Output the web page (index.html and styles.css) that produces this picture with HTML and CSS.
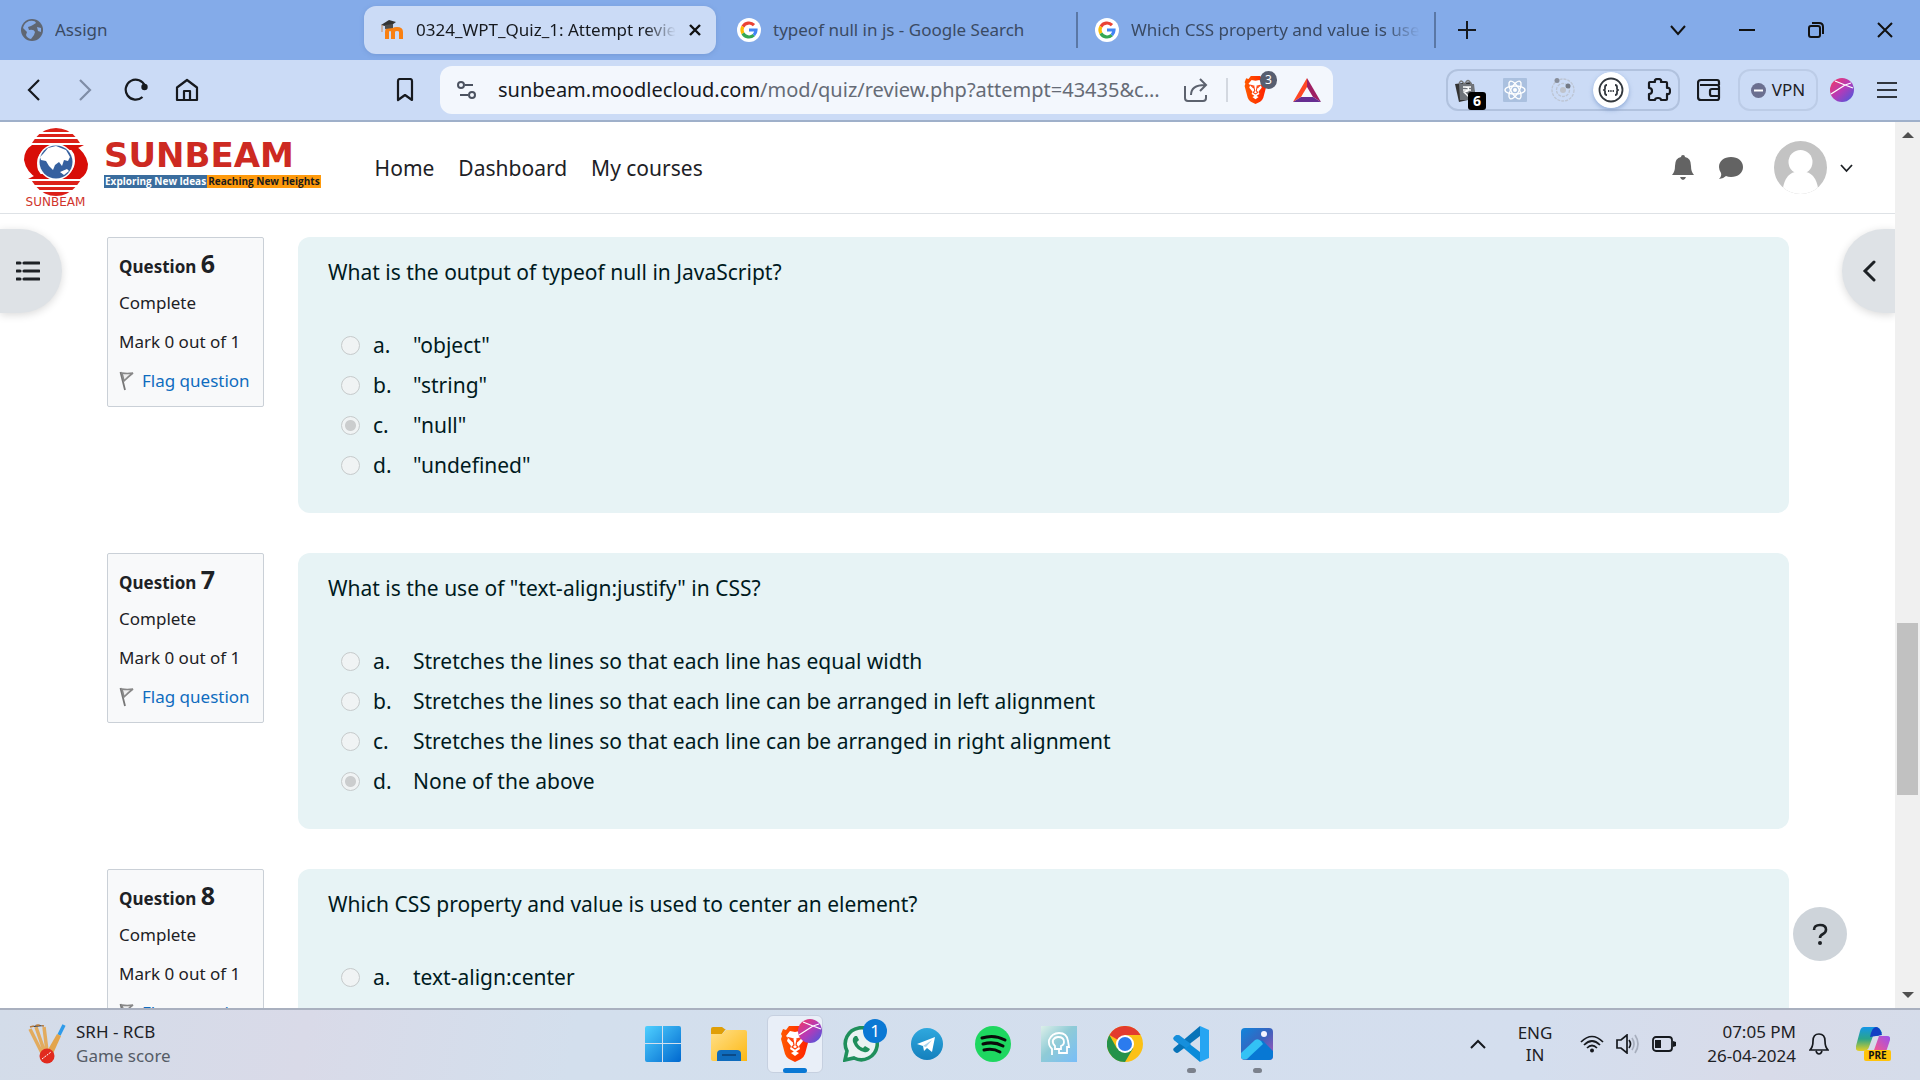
FILE: index.html
```html
<!DOCTYPE html>
<html lang="en">
<head>
<meta charset="utf-8">
<title>0324_WPT_Quiz_1: Attempt review</title>
<link rel="stylesheet" href="styles.css">
</head>
<body>
<svg class="defs" aria-hidden="true">
  <defs>
    <linearGradient id="gProfile" x1="0" y1="0" x2="1" y2="1"><stop offset="0" stop-color="#f8385c"/><stop offset=".5" stop-color="#b53ab8"/><stop offset="1" stop-color="#3f5be0"/></linearGradient>
    <linearGradient id="gWin" x1="0" y1="0" x2="1" y2="1"><stop offset="0" stop-color="#4fd0ff"/><stop offset="1" stop-color="#0068cf"/></linearGradient>
    <linearGradient id="gFolder" x1="0" y1="0" x2="1" y2="1"><stop offset="0" stop-color="#ffe08a"/><stop offset="1" stop-color="#fdb813"/></linearGradient>
    <linearGradient id="gBrave" x1="0" y1="0" x2="1" y2="0"><stop offset="0" stop-color="#ff5a00"/><stop offset="1" stop-color="#ff2000"/></linearGradient>
    <linearGradient id="gTele" x1="0" y1="0" x2="0" y2="1"><stop offset="0" stop-color="#2fa8de"/><stop offset="1" stop-color="#1480bd"/></linearGradient>
    <linearGradient id="gHead" x1="0" y1="0" x2="1" y2="1"><stop offset="0" stop-color="#dcefe9"/><stop offset=".45" stop-color="#8fcbd6"/><stop offset="1" stop-color="#78bdf8"/></linearGradient>
    <linearGradient id="gPhoto" x1="0" y1="0" x2="1" y2="1"><stop offset="0" stop-color="#0f86dc"/><stop offset=".5" stop-color="#3a62bd"/><stop offset="1" stop-color="#b454b8"/></linearGradient>
    <linearGradient id="gCopA" x1="0" y1="0" x2="0" y2="1"><stop offset="0" stop-color="#1496e8"/><stop offset=".5" stop-color="#2ba58a"/><stop offset="1" stop-color="#e6cf25"/></linearGradient>
    <linearGradient id="gCopB" x1="1" y1="0" x2="0" y2="1"><stop offset="0" stop-color="#9a50f0"/><stop offset="1" stop-color="#ff5a80"/></linearGradient>
    <symbol id="google" viewBox="0 0 24 24">
      <circle cx="12" cy="12" r="12" fill="#fff"/>
      <g fill="none" stroke-width="3.2">
        <path d="M5.9 8.6A7 7 0 0 1 17 7.1" stroke="#ea4335"/>
        <path d="M5.9 15.4a7 7 0 0 1 0-6.8" stroke="#fbbc05"/>
        <path d="M16.8 17.1A7 7 0 0 1 5.9 15.4" stroke="#34a853"/>
        <path d="M12 12h7a7 7 0 0 1-2.2 5.1" stroke="#4285f4"/>
      </g>
    </symbol>
    <symbol id="profile" viewBox="0 0 24 24">
      <circle cx="12" cy="12" r="12" fill="url(#gProfile)"/>
      <path d="M1 16 15 7l6-2M5 3l10 4 8 3" stroke="#fff" stroke-width="1.3" fill="none"/>
    </symbol>
    <symbol id="lion" viewBox="0 0 28 36">
      <path d="M8 0h12l3 4 3-1 2 5-1 2 1 3-4 15q-1 3-4 5l-6 3-6-3q-3-2-4-5L0 13l1-3-1-2 2-5 3 1z" fill="url(#gBrave)"/>
      <path d="M14 6 9 5 5 10l2 2-1 3 4 5-1 3 3 2 2 2 2-2 3-2-1-3 4-5-1-3 2-2-4-5z" fill="#fff"/>
      <path d="m8 12 4 1-1 2zM20 12l-4 1 1 2zM12 14l1 5-2 2 3 2 3-2-2-2 1-5" stroke="#ff4510" stroke-width="1.3" fill="none"/>
      <path d="m10 27 4-2 4 2-4 3z" fill="#fff"/>
    </symbol>
    <symbol id="flag" viewBox="0 0 16 20">
      <path d="M1.500 1 6 19" stroke="#777" stroke-width="1.8" fill="none"/>
      <path d="M3 2q5 1 11 0-4 3-9 8z" stroke="#888" stroke-width="1.6" fill="#eee"/>
    </symbol>
  </defs>
</svg>

<header class="browser">
  <div class="tabs">
    <button class="tab">
      <svg width="22" height="22" viewBox="0 0 22 22"><circle cx="11" cy="11" r="11" fill="#5f6672"/><path d="M8 2q6-1 7 2-3 2-5 3l-3 1 1 3q5-1 6 2l-1 3-3 4q-4-1-5-4l1-3-4-4q1-5 6-7zM16 8l4 1v4l-3-1z" fill="#86abe6"/></svg>
      <span class="tab-title">Assign</span>
    </button>
    <button class="tab active">
      <svg width="24" height="22" viewBox="0 0 24 22"><path d="M7 20v-7q0-3 3-3t3 3v7m0-7q0-3 4-3t4 3v7" fill="none" stroke="#f98012" stroke-width="4"/><path d="m1 6 8-5 7 2-7 5z" fill="#333"/><path d="M5 6v4l8-1V5z" fill="#4d4d4d"/><path d="M2 6v7" stroke="#c88a5a"/></svg>
      <span class="tab-title">0324_WPT_Quiz_1: Attempt review</span>
      <svg width="14" height="14" viewBox="0 0 14 14"><path d="m2 2 10 10M12 2 2 12" stroke="#111" stroke-width="2.400"/></svg>
    </button>
    <button class="tab divided">
      <svg width="24" height="24"><use href="#google"/></svg>
      <span class="tab-title">typeof null in js - Google Search</span>
    </button>
    <button class="tab divided last">
      <svg width="24" height="24"><use href="#google"/></svg>
      <span class="tab-title">Which CSS property and value is used to</span>
    </button>
    <button class="new-tab" aria-label="New tab"><svg width="18" height="18" viewBox="0 0 18 18"><path d="M9 0v18M0 9h18" stroke="#16191e" stroke-width="2"/></svg></button>
    <div class="window-controls">
      <button aria-label="Search tabs"><svg width="16" height="16" viewBox="0 0 16 16"><path d="m1 4 7 8 7-8" fill="none" stroke="#111" stroke-width="2"/></svg></button>
      <button aria-label="Minimize"><svg width="16" height="16" viewBox="0 0 16 16"><path d="M0 8h16" stroke="#111" stroke-width="2"/></svg></button>
      <button aria-label="Restore"><svg width="16" height="16" viewBox="0 0 16 16"><rect x="1" y="4" width="11" height="11" rx="2" fill="none" stroke="#111" stroke-width="2"/><path d="M4 1h7q4 0 4 4v7" fill="none" stroke="#111" stroke-width="2"/></svg></button>
      <button aria-label="Close"><svg width="16" height="16" viewBox="0 0 16 16"><path d="m1 1 14 14M15 1 1 15" stroke="#111" stroke-width="2"/></svg></button>
    </div>
  </div>

  <div class="toolbar">
    <div class="nav-buttons">
      <button aria-label="Back"><svg width="24" height="24" viewBox="0 0 24 24"><path d="m17 2-10 10 10 10" fill="none" stroke="#16191e" stroke-width="2.200"/></svg></button>
      <button aria-label="Forward"><svg width="24" height="24" viewBox="0 0 24 24"><path d="m7 2 10 10L7 22" fill="none" stroke="#7f8da6" stroke-width="2.200"/></svg></button>
      <button aria-label="Reload"><svg width="24" height="24" viewBox="0 0 24 24"><path d="M18.500 19A10 10 0 1 1 21 8" fill="none" stroke="#16191e" stroke-width="2.200"/><circle cx="20.500" cy="9" r="3.200" fill="#16191e"/></svg></button>
      <button aria-label="Home"><svg width="24" height="24" viewBox="0 0 24 24"><path d="M2 9.500 12 2l10 7.500V22H2zM9 22v-9h6v9" fill="none" stroke="#16191e" stroke-width="2.200" stroke-linejoin="round"/></svg></button>
    </div>
    <button class="bookmark" aria-label="Bookmark this page"><svg width="18" height="24" viewBox="0 0 18 24"><path d="M2 3q0-2 2-2h10q2 0 2 2v19l-7-5-7 5z" fill="none" stroke="#16191e" stroke-width="2.200" stroke-linejoin="round"/></svg></button>
    <div class="address">
      <svg width="20" height="20" viewBox="0 0 20 20"><g fill="none" stroke="#4b5260" stroke-width="2"><circle cx="4" cy="5" r="3"/><path d="M8 5h8M3 15h8"/><circle cx="15" cy="15" r="3"/></g></svg>
      <div class="url"><span>sunbeam.moodlecloud.com</span>/mod/quiz/review.php?attempt=43435&amp;c...</div>
      <svg width="24" height="24" viewBox="0 0 24 24"><path d="M1 8v12q0 3 3 3h15q3 0 3-3v-3M7 17q0-10 14-10M16 1l6 6-6 6" fill="none" stroke="#5c626e" stroke-width="2"/></svg>
      <i class="separator"></i>
      <div class="shield"><svg width="23" height="28"><use href="#lion"/></svg><span class="count">3</span></div>
      <svg class="bat" width="28" height="24" viewBox="0 0 28 24"><path d="M14 0 0 24l8-5 6-10z" fill="#ff4724"/><path d="m14 0 14 24-8-5-6-10z" fill="#9e1f63"/><path d="m0 24 8-5h12l8 5z" fill="#662d91"/></svg>
    </div>
    <div class="extensions">
      <div class="bag"><svg width="22" height="24" viewBox="0 0 22 24"><path d="M0 6 16 4l6 16-18 4z" fill="#333"/><path d="M4 6h15l2 16H5z" fill="#70747a"/><path d="M4 6q2-6 5 0m1 0q3-7 6 0" fill="none" stroke="#777" stroke-width="1.500"/><path d="M8 9h8m-8 3h8m-6-3q5 0 3 4l-4 1 5 5" stroke="#fff" fill="none" stroke-width="1.300"/></svg><span class="count">6</span></div>
      <svg width="24" height="24" viewBox="0 0 24 24"><rect width="24" height="24" rx="1" fill="#aac0df"/><g fill="none" stroke="#fff" stroke-width="1.400"><ellipse cx="12" cy="12" rx="10" ry="4"/><ellipse cx="12" cy="12" rx="10" ry="4" transform="rotate(60 12 12)"/><ellipse cx="12" cy="12" rx="10" ry="4" transform="rotate(120 12 12)"/></g><circle cx="12" cy="12" r="2" fill="#fff"/></svg>
      <svg width="24" height="24" viewBox="0 0 24 24"><g fill="none" stroke="#bdc5d3" stroke-width="1.300" stroke-dasharray="3 1"><circle cx="12" cy="12" r="11"/><circle cx="12" cy="12" r="6.500"/></g><circle cx="12" cy="12" r="3" fill="#bfc3cb"/><circle cx="6" cy="2.500" r="2.500" fill="#878d99"/><circle cx="17" cy="8" r="2.500" fill="#737985"/></svg>
      <svg class="braces" width="36" height="36" viewBox="0 0 36 36"><circle cx="18" cy="18" r="18" fill="#fff"/><g fill="none" stroke="#33383e" stroke-width="1.800"><circle cx="18" cy="18" r="11.500"/><path d="M14 13q-2 0-2 2v2l-1 1 1 1v2q0 2 2 2M22 13q2 0 2 2v2l1 1-1 1v2q0 2-2 2"/><path d="M15 19h6" stroke-dasharray="1.300 1"/></g></svg>
      <svg width="24" height="24" viewBox="0 0 24 24"><path d="M3 4h5q-1-3 3-3t3 3h5q1 0 1 1v5q3-1 3 3t-3 3v5q0 1-1 1h-5q0-2-3-2t-3 2H3q-1 0-1-1v-5q3 0 3-3t-3-3V5q0-1 1-1z" fill="none" stroke="#16191e" stroke-width="2.200" stroke-linejoin="round"/></svg>
    </div>
    <svg width="24" height="24" viewBox="0 0 24 24"><path d="M22 7V4q0-2-2-2H4Q1 2 1 5v14q0 3 3 3h16q2 0 2-2V9q0-2-2-2H3M22 11h-7q-2 0-2 2v3q0 2 2 2h7" fill="none" stroke="#16191e" stroke-width="2.200"/></svg>
    <button class="vpn"><svg width="15" height="15" viewBox="0 0 15 15"><circle cx="7.500" cy="7.500" r="7.500" fill="#6b6f90"/><path d="M3 7.500h9" stroke="#fff" stroke-width="2"/></svg>VPN</button>
    <svg class="avatar-chip" width="24" height="24"><use href="#profile"/></svg>
    <button class="menu" aria-label="Menu"><svg width="20" height="20" viewBox="0 0 20 20"><path d="M0 3h20M0 10h20M0 17h20" stroke="#30353d" stroke-width="2"/></svg></button>
  </div>
</header>

<div class="viewport">
  <div class="page">
    <nav class="site-nav">
      <a href="#" class="brand" aria-label="Sunbeam home">
        <span class="emblem">
          <svg width="64" height="68" viewBox="0 0 64 68"><defs><clipPath id="oval"><ellipse cx="32" cy="34" rx="29" ry="34"/></clipPath>
            <path id="swoosh" d="M8 17H60L50 22H44Q32 14 22 20Q10 28 14 42L20 51H14Q2 44 0 32Q0 22 8 17z"/></defs>
            <g clip-path="url(#oval)" fill="#dc2018"><path d="M0 0h64v4H0zM0 6h64v3H0zM0 11h64v4H0zM0 53h64v4H0zM0 59h64v3H0zM0 64h64v4H0z"/></g>
            <g fill="#d80e08"><use href="#swoosh"/><use href="#swoosh" transform="rotate(180 32 34)"/></g>
            <circle cx="32" cy="34" r="18" fill="#fff"/><circle cx="32" cy="34" r="16.500" fill="#35609f"/>
            <path d="m19 26 5-6 8-2 10 4 4 7-2 4-4-1-2 6-3-4-4 3-2 5-4-4-3-5-5-1-1-3zM36 44l7-3 2 2-5 4z" fill="#fff"/>
          </svg>
          <span class="emblem-name">SUNBEAM</span>
        </span>
        <span class="wordmark"><b>SUNBEAM</b><span class="tagline"><span>Exploring New Ideas</span><span>Reaching New Heights</span></span></span>
      </a>
      <a href="#">Home</a>
      <a href="#">Dashboard</a>
      <a href="#">My courses</a>
      <div class="user-tools">
        <button aria-label="Notifications"><svg width="22" height="26" viewBox="0 0 22 26"><path d="M11 0q2 0 2 2 6 1 6 9 0 6 3 9H0q3-3 3-9 0-8 6-9 0-2 2-2zM8 22h6q-1 3-3 3t-3-3z" fill="#636363"/></svg></button>
        <button aria-label="Messages"><svg width="24" height="24" viewBox="0 0 24 24"><path d="M12 1c7 0 12 4 12 10s-5 10-12 10q-3 0-5-1-3 3-7 3 3-3 2-6-2-3-2-6C0 5 5 1 12 1z" fill="#636363"/></svg></button>
        <button class="user-menu" aria-label="User menu"><svg width="53" height="53" viewBox="0 0 53 53"><defs><clipPath id="av"><circle cx="26.500" cy="26.500" r="26.500"/></clipPath></defs><g clip-path="url(#av)"><rect width="53" height="53" fill="#c3c3c3"/><circle cx="26.500" cy="21" r="12" fill="#fff"/><path d="M8 53q2-20 13-22h11q11 2 13 22z" fill="#fff"/></g></svg><svg width="13" height="10" viewBox="0 0 13 10"><path d="m1 2 5.500 6L12 2" fill="none" stroke="#1d2125" stroke-width="1.800"/></svg></button>
      </div>
    </nav>

    <main class="questions">
      <section class="question">
        <div class="info"><h3>Question <span>6</span></h3><p>Complete</p><p>Mark 0 out of 1</p><a href="#"><svg width="16" height="20"><use href="#flag"/></svg>Flag question</a></div>
        <fieldset class="formulation" disabled>
          <legend>What is the output of typeof null in JavaScript?</legend>
          <label><input type="radio" name="q6"><span>a.</span>"object"</label>
          <label><input type="radio" name="q6"><span>b.</span>"string"</label>
          <label><input type="radio" name="q6" checked><span>c.</span>"null"</label>
          <label><input type="radio" name="q6"><span>d.</span>"undefined"</label>
        </fieldset>
      </section>
      <section class="question">
        <div class="info"><h3>Question <span>7</span></h3><p>Complete</p><p>Mark 0 out of 1</p><a href="#"><svg width="16" height="20"><use href="#flag"/></svg>Flag question</a></div>
        <fieldset class="formulation" disabled>
          <legend>What is the use of "text-align:justify" in CSS?</legend>
          <label><input type="radio" name="q7"><span>a.</span>Stretches the lines so that each line has equal width</label>
          <label><input type="radio" name="q7"><span>b.</span>Stretches the lines so that each line can be arranged in left alignment</label>
          <label><input type="radio" name="q7"><span>c.</span>Stretches the lines so that each line can be arranged in right alignment</label>
          <label><input type="radio" name="q7" checked><span>d.</span>None of the above</label>
        </fieldset>
      </section>
      <section class="question">
        <div class="info"><h3>Question <span>8</span></h3><p>Complete</p><p>Mark 0 out of 1</p><a href="#"><svg width="16" height="20"><use href="#flag"/></svg>Flag question</a></div>
        <fieldset class="formulation" disabled>
          <legend>Which CSS property and value is used to center an element?</legend>
          <label><input type="radio" name="q8"><span>a.</span>text-align:center</label>
        </fieldset>
      </section>
    </main>

    <button class="drawer drawer-left" aria-label="Open course index"><svg width="24" height="22" viewBox="0 0 24 22"><path d="M8 3h15M8 11h15M8 19h15M1 3h3M1 11h3M1 19h3" stroke="#1d2125" stroke-width="3.200" stroke-linecap="round"/></svg></button>
    <button class="drawer drawer-right" aria-label="Open block drawer"><svg width="14" height="22" viewBox="0 0 14 22"><path d="m12 2-9 9 9 9" fill="none" stroke="#1d2125" stroke-width="3" stroke-linecap="round"/></svg></button>
    <button class="help" aria-label="Help"><svg width="16" height="22" viewBox="0 0 16 22"><path d="M2 7q0-5 6-5t6 4.500q0 3-3 4.500-3 1.500-3 4" fill="none" stroke="#1d2125" stroke-width="2.600"/><circle cx="8" cy="20" r="2" fill="#1d2125"/></svg></button>
  </div>
  <div class="scrollbar">
    <svg width="12" height="25" viewBox="0 0 12 25"><path d="m0 16 6-6 6 6z" fill="#505050"/></svg>
    <i class="above"></i><i class="thumb"></i><i class="below"></i>
    <svg width="12" height="25" viewBox="0 0 12 25"><path d="m0 9 6 6 6-6z" fill="#505050"/></svg>
  </div>
</div>

<footer class="taskbar">
  <div class="widget">
    <svg width="38" height="40" viewBox="0 0 38 40"><g stroke="#e2ab5e" stroke-width="3.500"><path d="m2 5 13 26M8 3l9 26M16 3l3 24"/></g><path d="m2 3 8-2 6 1" stroke="#b5793c" stroke-width="1.500" stroke-dasharray="4 2"/><path d="m36 1-5 10" stroke="#2f9bea" stroke-width="3.500"/><path d="m29 10 4 2-9 20-6-3z" fill="#e3a44b"/><circle cx="19" cy="32" r="7.500" fill="#e12a1e"/><path d="m14 35 9-7" stroke="#fff" stroke-width="1" stroke-dasharray="2 1"/></svg>
    <div><span>SRH - RCB</span><span class="muted">Game score</span></div>
  </div>
  <div class="apps">
    <button aria-label="Start"><svg width="36" height="36" viewBox="0 0 36 36"><path d="M2 0h15v17H0V2q0-2 2-2zM18 0h16q2 0 2 2v15H18zM0 18h17v18H2q-2 0-2-2zM18 18h18v16q0 2-2 2H18z" fill="url(#gWin)"/></svg></button>
    <button aria-label="File Explorer"><svg width="36" height="34" viewBox="0 0 36 34"><path d="M0 2q0-2 2-2h9l4 3h-1l-3 4H0z" fill="#e09f06"/><path d="M0 7h11l4-4h19q2 0 2 2v29H2q-2 0-2-2z" fill="url(#gFolder)"/><path d="M6 34v-7q0-4 4-4h16q4 0 4 4v7z" fill="#0f6cbd"/><path d="M11 28h14" stroke="#0b4a87" stroke-width="2"/></svg></button>
    <button class="current" aria-label="Brave"><svg class="app-icon" width="28" height="36"><use href="#lion"/></svg><svg class="overlay" width="24" height="24"><use href="#profile"/></svg></button>
    <button aria-label="WhatsApp"><svg width="36" height="36" viewBox="0 0 36 36"><path d="m2 34 2-9A16 16 0 1 1 11 32z" fill="#e9f3f2" stroke="#1f8f5b" stroke-width="3.600"/><path d="M12 10q-3 2-2 6 3 8 11 10 4 1 6-3l-5-3-2 2q-5-2-6-6l2-2-2-4z" fill="#1f8f5b"/></svg><span class="overlay badge">1</span></button>
    <button aria-label="Telegram"><svg width="32" height="32" viewBox="0 0 32 32"><circle cx="16" cy="16" r="16" fill="url(#gTele)"/><path d="m6 16 18-7-3 15-5-4-3 3-1-5z" fill="#fff"/><path d="m12 18 9-6-6 7z" fill="#a9d3ec"/></svg></button>
    <button aria-label="Spotify"><svg width="36" height="36" viewBox="0 0 36 36"><circle cx="18" cy="18" r="18" fill="#1ed760"/><path d="M7 12q12-4 23 2M8 18q11-3 20 2M9 24q9-2 16 2" fill="none" stroke="#0a0a0a" stroke-width="3" stroke-linecap="round"/></svg></button>
    <button aria-label="Assistant"><svg width="36" height="36" viewBox="0 0 36 36"><rect width="36" height="36" fill="url(#gHead)"/><g fill="none" stroke="#fff" stroke-width="1.800"><path d="M11 29v-6q-4-4-3-9 3-7 10-7 8 0 9 8l1 6h-2v6h-8v-5"/><path d="M14 24v-4q-3-3-2-6 2-3 5-3 6 0 6 5 0 3-3 4v3h-5"/></g></svg></button>
    <button aria-label="Chrome"><svg width="36" height="36" viewBox="0 0 36 36"><circle cx="18" cy="18" r="18" fill="#fbc116"/><path d="M18 18 2.400 9A18 18 0 0 1 33.600 9H18z" fill="#e33b2e"/><path d="M2.400 9A18 18 0 0 0 18 36l8-13.500-8-4.500-8 4.500z" fill="#24924a"/><circle cx="18" cy="18" r="9" fill="#fff"/><circle cx="18" cy="18" r="7" fill="#2b7bee"/></svg></button>
    <button class="open" aria-label="Visual Studio Code"><svg width="36" height="36" viewBox="0 0 36 36"><path d="M2 10q2-2 4 0l21 16v10L1 14q-2-2 1-4z" fill="#0b8bd9"/><path d="M2 26q2 2 4 0l21-16V0L1 22q-2 2 1 4z" fill="#0773b8"/><path d="m2 10 4-1 12 9-5 4L1 14z" fill="#168fdc"/><path d="m27 0 9 4v28l-9 4z" fill="#26a5f2"/></svg></button>
    <button class="open" aria-label="Photos"><svg width="32" height="32" viewBox="0 0 32 32"><rect width="32" height="32" rx="4" fill="url(#gPhoto)"/><path d="m6 32 12-18q3-3 5 0l9 9v5q0 4-4 4z" fill="#0878d4"/><path d="M0 25 14 12q3-2 6 1l2 3L6 31q-6 2-6-3z" fill="#33c2f5"/><circle cx="23" cy="6" r="3" fill="#f4f4ff"/></svg></button>
  </div>
  <div class="tray">
    <svg width="16" height="10" viewBox="0 0 16 10"><path d="m1 9 7-7 7 7" fill="none" stroke="#16191e" stroke-width="2"/></svg>
    <div class="lang"><span>ENG</span><span>IN</span></div>
    <div class="status">
      <svg width="24" height="18" viewBox="0 0 24 18"><g fill="none" stroke="#16191e" stroke-width="1.700"><path d="M1 7q11-11 22 0M4 10q8-8 16 0M7 13q5-5 10 0"/></g><circle cx="12" cy="15.500" r="2" fill="#16191e"/></svg>
      <svg width="24" height="20" viewBox="0 0 24 20"><path d="M1 6h4l6-5v18l-6-5H1zM13 6q3 4 0 8" fill="none" stroke="#16191e" stroke-width="1.700"/><path d="M16 4q4 6 0 12M19 1q6 9 0 18" fill="none" stroke="#a7aebd" stroke-width="1.700"/></svg>
      <svg width="24" height="16" viewBox="0 0 24 16"><rect x="1" y="1" width="19" height="14" rx="3" fill="none" stroke="#16191e" stroke-width="1.800"/><path d="M3 4h6v8H3zM21 5l3 1v4l-3 1z" fill="#16191e"/></svg>
    </div>
    <div class="clock"><span>07:05 PM</span><span>26-04-2024</span></div>
    <svg width="20" height="22" viewBox="0 0 20 22"><path d="M1 17q3-3 3-9 0-7 6-7t6 7q0 6 3 9zM7 18q1 3 3 3t3-3" fill="none" stroke="#16191e" stroke-width="1.700"/></svg>
    <div class="copilot"><svg width="34" height="26" viewBox="0 0 34 26"><path d="M8 0h12q4 0 6 6l-4 3h-5L13 20q-1 4-6 4H3q-4 0-3-5L4 4q1-4 4-4z" fill="url(#gCopA)"/><path d="M14 10q2-10 6-10 4 0 6 8z" fill="#123fc4"/><path d="M23 9h8q4 0 3 4l-3 9q-1 4-5 4h-9z" fill="url(#gCopB)"/></svg><span class="overlay pre">PRE</span></div>
  </div>
</footer>
</body>
</html>
```
FILE: styles.css
```css
* { box-sizing: border-box; }

body {
  margin: 0;
  height: 100vh;
  display: flex;
  flex-direction: column;
  overflow: hidden;
  font: 21px/34px "Noto Sans", "Open Sans", sans-serif;
  color: #1d2125;
  background: #fff;
}

button { margin: 0; padding: 0; border: 0; background: none; font: inherit; color: inherit; }
a { color: inherit; text-decoration: none; }
svg { display: block; flex: none; }
.defs { position: absolute; width: 0; height: 0; }

/* Browser chrome */
.tabs { height: 60px; display: flex; align-items: center; background: #84abe9; font-size: 17px; }
.tab {
  flex: 0 1 358px;
  height: 48px;
  min-width: 0;
  display: flex;
  align-items: center;
  gap: 12px;
  padding: 0 16px;
  color: #3a4a63;
  position: relative;
}
.tab:first-child { padding-left: 21px; }
.tab-title { flex: 1; min-width: 0; overflow: hidden; white-space: nowrap; text-align: left; }
.tab.active { flex-basis: 352px; margin: 0 4px 0 6px; padding-right: 14px; border-radius: 12px; background: #cbdbf6; color: #16191e; box-shadow: 0 1px 4px #5f83bb66; }
.tab.active .tab-title, .tab.last .tab-title { mask-image: linear-gradient(to right, #000 88%, transparent); }
.tab.divided { padding-left: 17px; }
.tab.divided::after { content: ""; position: absolute; right: 0; top: 6px; width: 2px; height: 36px; background: #5a77a5; }
.new-tab { margin-left: 22px; }
.window-controls { margin-left: auto; padding-right: 27px; display: flex; gap: 53px; }

.toolbar { height: 62px; display: flex; align-items: center; background: #cbdbf6; border-bottom: 2px solid #9fb0ca; }
.nav-buttons { display: flex; gap: 27px; padding-left: 22px; }
.bookmark { margin: 0 26px 0 197px; }
.address { flex: 1; height: 48px; min-width: 0; display: flex; align-items: center; padding: 0 12px 0 17px; background: #f3f7fd; border-radius: 12px; font-size: 20px; }
.url { flex: 1; min-width: 0; margin-left: 21px; overflow: hidden; white-space: nowrap; color: #656b76; }
.url span { color: #16191e; }
.separator { width: 2px; height: 24px; margin: 0 16px 0 18px; background: #d3d8e0; }
.shield, .bag { position: relative; }
.shield .count { position: absolute; left: 16px; top: -5px; width: 17px; height: 18px; border-radius: 9px; background: #575e70; color: #fff; font-size: 12px; line-height: 18px; text-align: center; }
.bat { margin-left: 26px; }
.extensions { height: 42px; margin-left: 113px; display: flex; align-items: center; gap: 24px; padding: 0 7px; border: 2px solid #b1c2de; border-radius: 12px; }
.bag { width: 24px; }
.bag .count { position: absolute; left: 13px; top: 14px; width: 18px; height: 18px; border-radius: 3px; background: #000; color: #fff; font-size: 14px; font-weight: 700; line-height: 18px; text-align: center; }
.braces { margin: 0 -6px; border-radius: 50%; box-shadow: 0 2px 4px #5f83bb88; }
.extensions + svg { margin: 0 17px; }
.vpn { width: 80px; height: 42px; display: flex; align-items: center; justify-content: center; gap: 6px; border: 2px solid #bccce7; border-radius: 12px; font-size: 17px; }
.avatar-chip { margin: 0 23px 0 12px; }
.menu { margin-right: 23px; }

/* Site */
.viewport { flex: 1; min-height: 0; display: flex; }
.page { flex: 1; min-width: 0; overflow: hidden; position: relative; }
.site-nav { height: 92px; display: flex; align-items: center; gap: 24px; padding: 0 42px 0 23px; border-bottom: 1px solid #dee2e6; }
.brand { display: flex; margin-right: 30px; }
.emblem { display: flex; flex-direction: column; align-items: center; width: 65px; }
.emblem-name { color: #d0342c; font: 12px/12px "DejaVu Sans", sans-serif; }
.wordmark { display: flex; flex-direction: column; padding: 8px 0 0 16px; }
.wordmark b { color: #cd2a22; font: 700 34px/38px "DejaVu Sans", sans-serif; }
.tagline { display: flex; font: 700 10px/13px "Open Sans", sans-serif; white-space: nowrap; margin-top: 1px; }
.tagline span { padding: 0 1px; background: #3a6d9e; color: #fff; }
.tagline span + span { background: #ff9a0c; color: #1b1b1b; }
.user-tools { margin-left: auto; display: flex; align-items: center; gap: 25px; }
.user-menu { display: flex; align-items: center; gap: 13px; margin-left: 6px; }

.questions { display: flex; flex-direction: column; gap: 40px; padding: 23px 106px 0 107px; }
.question { display: flex; align-items: flex-start; gap: 34px; min-height: 276px; }
.info { flex: none; width: 157px; padding: 11px 0 11px 11px; border: 1px solid #cad0d7; border-radius: 2px; background: #f8f9fa; font-size: 17px; line-height: 28px; white-space: nowrap; }
.info h3 { margin: 0 0 8px; font-size: 17px; line-height: 28px; }
.info h3 span { font-size: 25px; }
.info p { margin: 0 0 11px; line-height: 28px; }
.info a { display: flex; align-items: center; gap: 7px; color: #0f6cbf; }
.formulation { flex: 1; min-width: 0; margin: 0; align-self: stretch; padding: 18px 30px 28px; border: 0; border-radius: 12px; background: #e7f3f5; color: #001a1e; }
.formulation legend { float: left; width: 100%; padding: 0; margin-bottom: 36px; }
.formulation label { clear: both; display: flex; align-items: center; height: 40px; padding-left: 13px; }
.formulation label span { width: 40px; }
.formulation input { appearance: none; width: 19px; height: 19px; margin: 0 13px 0 0; border: 1px solid #c6cacb; border-radius: 50%; background: #f0f3f4; }
.formulation input:checked { background: radial-gradient(circle, #cbcdce 0 5px, #f0f3f4 6px); }

.drawer { position: absolute; top: 107px; height: 84px; background: #dee2e6; display: flex; align-items: center; box-shadow: 0 2px 8px #00000026; }
.drawer-left { left: 0; width: 62px; padding-left: 16px; border-radius: 0 42px 42px 0; }
.drawer-right { right: 0; width: 53px; padding-left: 20px; border-radius: 42px 0 0 42px; }
.help { position: absolute; right: 48px; bottom: 47px; width: 54px; height: 54px; display: flex; align-items: center; justify-content: center; border-radius: 50%; background: #ced4da; }

.scrollbar { width: 25px; display: flex; flex-direction: column; align-items: center; background: #f0f0f0; }
.above { flex: 476; }
.thumb { flex: 172; width: 21px; background: #c1c1c1; }
.below { flex: 188; }

/* Taskbar */
.taskbar { height: 72px; padding-bottom: 2px; display: grid; grid-template-columns: 1fr auto 1fr; align-items: center; border-top: 2px solid #a9b0bf; background: linear-gradient(100deg, #d3dce9, #d9dae8 16%, #d3dfed 30%, #d4deee 80%, #d8dbe9 92%, #d5dcea); font-size: 17px; line-height: 24px; }
.widget { display: flex; align-items: center; gap: 10px; padding-left: 28px; }
.widget span, .lang span, .clock span { display: block; }
.muted { color: #555b66; }
.apps { display: flex; }
.apps button { width: 66px; height: 58px; display: flex; align-items: center; justify-content: center; position: relative; }
.current::before { content: ""; position: absolute; inset: 0 5px; border-radius: 6px; background: #e9eff8; border: 1px solid #c6d0e0; }
.app-icon { position: relative; }
.apps .current::after, .open::after { content: ""; position: absolute; bottom: 0; width: 24px; height: 5px; border-radius: 3px; background: #0a78d4; }
.open::after { width: 9px; background: #7b818c; }
.overlay { position: absolute; }
.current .overlay { right: 6px; top: 4px; }
.badge { right: 7px; top: 4px; width: 24px; height: 24px; border-radius: 50%; background: #0a78d4; color: #fff; font-size: 17px; }
.tray { justify-self: end; display: flex; align-items: center; padding-right: 30px; }
.lang { width: 60px; margin: 0 15px 0 19px; text-align: center; line-height: 22px; }
.status { display: flex; align-items: center; gap: 12px; margin-right: 20px; }
.clock { width: 100px; text-align: right; margin-right: 13px; white-space: nowrap; display: flex; flex-direction: column; align-items: flex-end; }
.copilot { position: relative; height: 35px; margin-left: 27px; }
.pre { left: 8px; bottom: 1px; width: 27px; height: 11px; border-radius: 2px; background: #ffc30b; color: #111; font-size: 10px; font-weight: 700; line-height: 11px; text-align: center; }
```
